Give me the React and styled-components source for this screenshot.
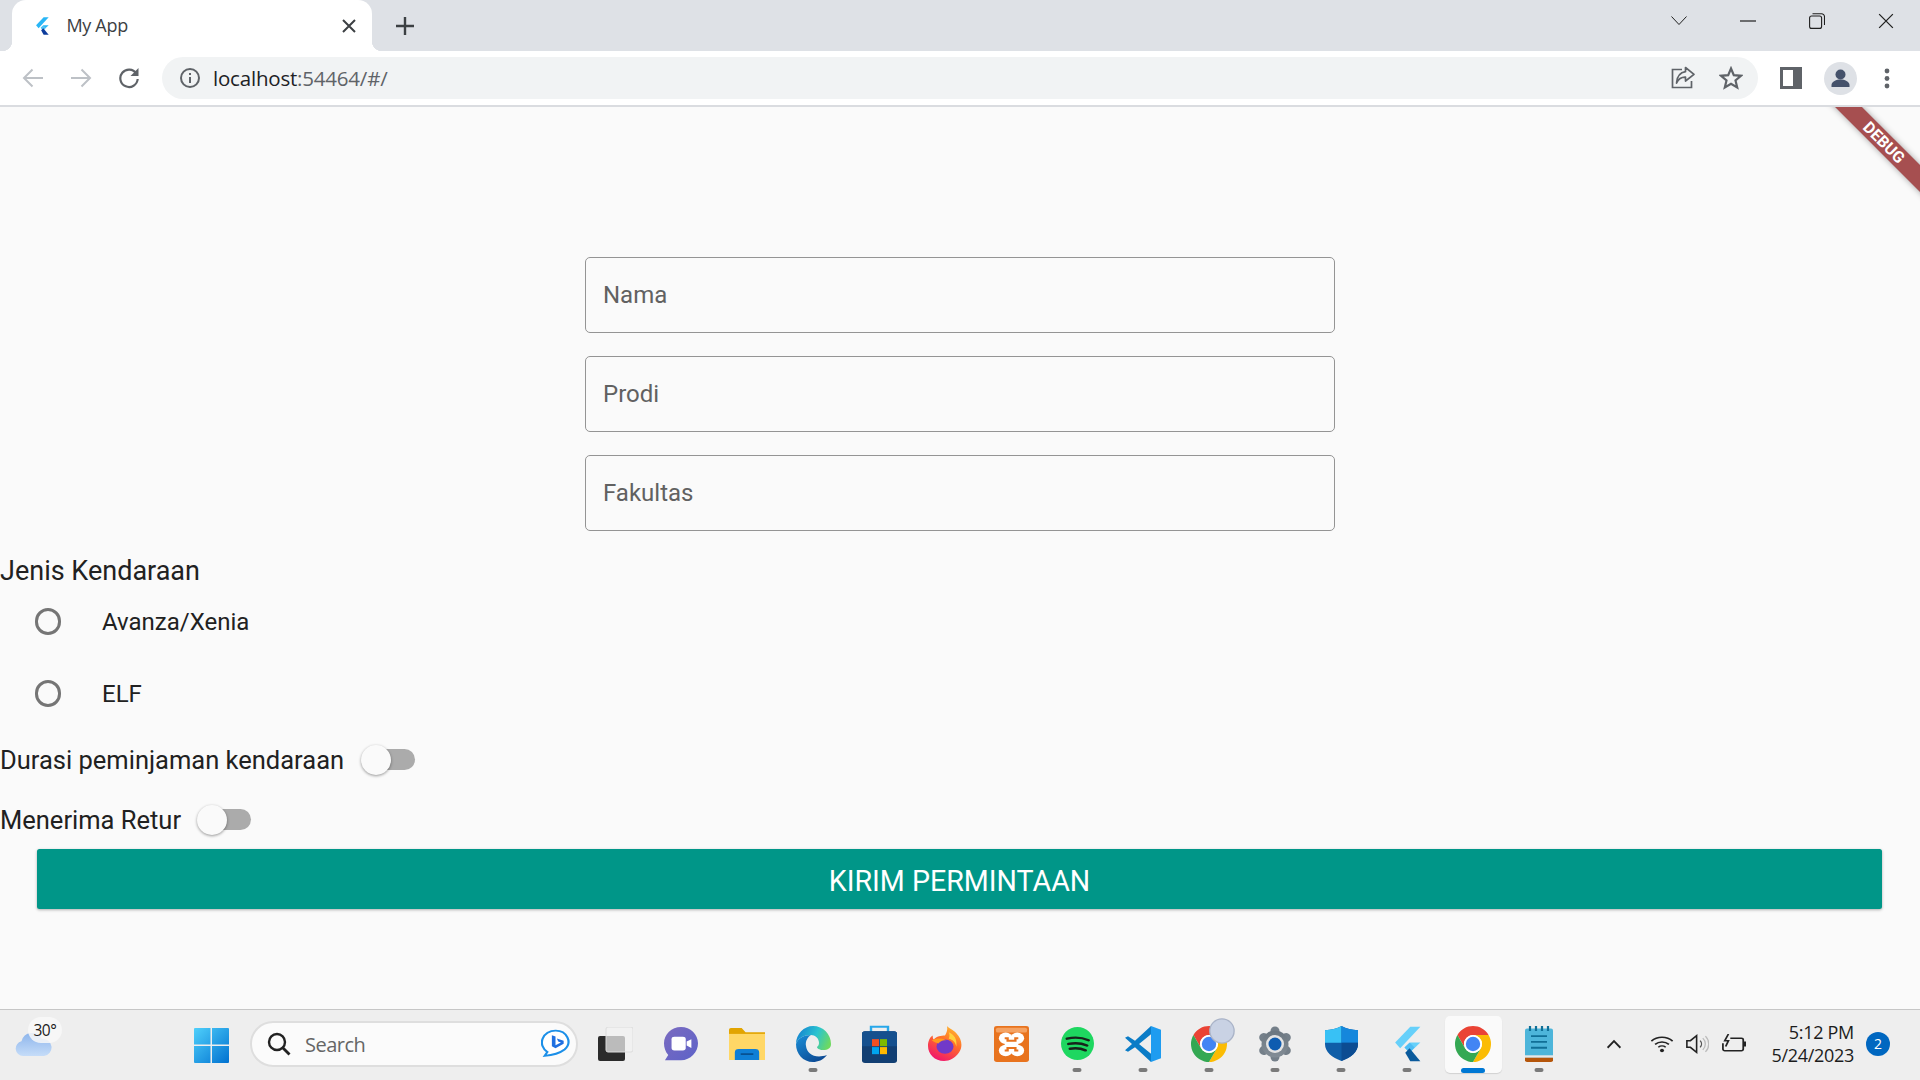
import React from 'react';
import styled, { createGlobalStyle } from 'styled-components';

const Global = createGlobalStyle`
  html, body { margin: 0; padding: 0; background: #fafafa; }
  * { box-sizing: border-box; }
`;
const UI = '"Open Sans", "Noto Sans", "Liberation Sans", sans-serif';
const APP = 'Roboto, "Liberation Sans", sans-serif';

const Page = styled.div`width:1920px;height:1080px;display:flex;flex-direction:column;overflow:hidden;font-family:${APP};`;
const TabStrip = styled.div`height:51px;background:#dee1e6;display:flex;padding-left:12px;flex:none;`;
const Tab = styled.div`
  position:relative;width:360px;height:51px;background:#fff;border-radius:14px 14px 0 0;display:flex;align-items:center;padding:0 16px 0 23px;
  &::before,&::after{content:"";position:absolute;bottom:0;width:10px;height:10px;}
  &::before{left:-10px;background:radial-gradient(circle at 0 0,transparent 10px,#fff 10.5px);}
  &::after{right:-10px;background:radial-gradient(circle at 100% 0,transparent 10px,#fff 10.5px);}
`;
const TabTitle = styled.span`margin:0 0 2px 17px;font:400 18px ${UI};color:#3c4043;letter-spacing:-.3px;`;
const TabClose = styled.span`margin-left:auto;display:flex;`;
const NewTab = styled.span`margin-left:24px;display:flex;align-items:center;`;
const WindowControls = styled.div`margin-left:auto;display:flex;height:42px;`;
const WinButton = styled.span`width:69px;display:flex;align-items:center;justify-content:center;`;
const Toolbar = styled.div`height:56px;flex:none;background:#fff;border-bottom:2px solid #dadce0;display:flex;align-items:center;padding:0 0 0 9px;`;
const NavButton = styled.span`width:48px;display:flex;justify-content:center;`;
const Omnibox = styled.div`margin-left:9px;width:1596px;height:42px;border-radius:21px;background:#f1f3f4;display:flex;align-items:center;padding:0 15px 0 16px;`;
const Url = styled.span`margin-left:11px;font:400 20.5px ${UI};color:#202124;letter-spacing:-.2px;`;
const UrlDim = styled.span`color:#5f6368;`;
const OmniActions = styled.div`margin-left:auto;display:flex;gap:24px;`;
const ToolSlot = styled.span`width:34px;display:flex;justify-content:center;margin-left:${p=>p.$ml}px;`;

const Main = styled.main`position:relative;flex:1;overflow:hidden;background:#fafafa;padding-top:150px;color:#212121;`;
const Debug = styled.div`
  position:absolute;top:26px;right:-44px;width:160px;height:19px;background:#a64f50;color:#fff;transform:rotate(45deg);
  display:flex;align-items:center;justify-content:center;font:700 16px/19px ${APP};box-shadow:0 0 6px rgba(0,0,0,.35);
`;
const Fields = styled.div`width:750px;margin:0 0 0 585px;display:flex;flex-direction:column;gap:23px;`;
const Field = styled.div`height:76px;border:1.5px solid #949494;border-radius:5px;padding:0 17px;display:flex;align-items:center;font-size:24px;color:#616161;`;
const Title = styled.div`padding-top:25px;height:54px;font-size:27px;line-height:30px;`;
const RadioList = styled.div`padding-bottom:1px;`;
const RadioRow = styled.div`height:72px;display:flex;align-items:center;padding:1px 0 0 34.5px;font-size:24px;`;
const Radio = styled.span`width:26.5px;height:26.5px;border:3px solid #757575;border-radius:50%;margin-right:41px;`;
const SwitchGroup = styled.div`height:119px;`;
const SwitchRow = styled.div`height:60px;display:flex;align-items:center;font-size:25.5px;`;
const Toggle = styled.span`position:relative;width:53.5px;height:30px;margin:0 0 1px ${p=>p.$ml}px;display:flex;align-items:center;justify-content:flex-end;`;
const Track = styled.span`width:41px;height:21px;border-radius:10.5px;background:#ababab;`;
const Thumb = styled.span`position:absolute;left:0;top:0;width:30px;height:30px;border-radius:50%;background:#fafafa;box-shadow:0 1px 3px rgba(0,0,0,.4);`;
const Submit = styled.div`
  margin:0 38px 0 37px;height:60px;padding-top:3px;background:#009688;color:#fff;border-radius:2.5px;display:flex;align-items:center;justify-content:center;
  font-size:28.6px;font-weight:400;box-shadow:0 1px 3px rgba(0,0,0,.3);
`;

const Taskbar = styled.footer`height:71px;flex:none;background:#eeeeee;border-top:1px solid #c6c6c6;display:flex;align-items:center;`;
const Weather = styled.div`position:relative;width:194px;height:70px;padding:23px 0 0 15px;`;
const Temp = styled.span`position:absolute;left:28px;top:7px;width:34px;height:26px;border-radius:13px;background:rgba(248,248,248,.85);font:400 15.5px/26px ${UI};color:#1c1c1c;text-align:center;letter-spacing:-.4px;`;
const Start = styled.span`width:35px;height:35px;margin-right:21px;display:flex;`;
const SearchBox = styled.div`width:328px;height:46px;margin:0 4px 2px 0;border-radius:23px;background:#fbfbfb;border:2px solid #dedede;display:flex;align-items:center;padding:0 6px 0 15px;`;
const SearchText = styled.span`margin-left:14px;font:400 20px ${UI};color:#666;letter-spacing:-.5px;`;
const BingWrap = styled.span`margin-left:auto;display:flex;`;
const Slot = styled.span`position:relative;width:66px;height:70px;display:flex;align-items:center;justify-content:center;padding-bottom:3px;`;
const ActiveTile = styled.span`position:absolute;left:4.5px;top:6px;width:57px;height:57px;border-radius:5px;background:#fafafa;box-shadow:0 1px 1px rgba(0,0,0,.12);`;
const IconLayer = styled.span`position:relative;display:flex;`;
const RunDot = styled.span`position:absolute;bottom:${p=>p.$active?'7px':'8px'};left:50%;transform:translateX(-50%);height:${p=>p.$active?'5px':'4.5px'};border-radius:3px;width:${p=>p.$active?'24px':'9px'};background:${p=>p.$active?'#0078d4':'#7a7a7a'};`;
const Tray = styled.span`display:flex;margin:0 0 2px ${p=>p.$ml}px;`;
const Clock = styled.div`width:100px;margin:0 0 2px 8px;text-align:right;font:400 18px/23px ${UI};color:#1c1c1c;letter-spacing:-.3px;`;
const Badge = styled.span`width:24px;height:24px;margin:0 0 2px 12px;border-radius:50%;background:#0067c0;color:#fff;font:400 14px/24px ${UI};text-align:center;`;

const Flutter = ({h=24,c1='#54c5f8',c2='#29b6f6',c3='#01579b'}) => (
  <svg width={h*0.8} height={h} viewBox="0 0 20 24"><polygon fill={c1} points="12,0 19,0 5,15 1.5,11"/><polygon fill={c1} points="12,11 19,11 11.5,18 8,14.5"/><polygon fill={c2} points="8,14.5 11.5,11 15,14.500 11.500,18"/><polygon fill={c3} points="8.500,18 11.500,15 19,24 12,24"/></svg>
);
const X = ({s=14,c='#3c4043',w=2}) => <svg width={s} height={s} viewBox="0 0 14 14"><path d="M1 1 13 13M13 1 1 13" stroke={c} strokeWidth={w} fill="none"/></svg>;
const Plus = () => <svg width="18" height="18" viewBox="0 0 18 18"><path d="M9 0v18M0 9h18" stroke="#3c4043" strokeWidth="2.4"/></svg>;
const Arrow = ({dir,c}) => <svg width="22" height="20" viewBox="0 0 22 20" style={{transform:dir==='r'?'scaleX(-1)':undefined}}><path d="M21 10H2.500M10.500 1.500 2 10l8.500 8.500" stroke={c} strokeWidth="2" fill="none"/></svg>;
const Reload = () => <svg width="22" height="22" viewBox="0 0 22 22"><path d="M18.300 6.500A8.700 8.700 0 1 0 19.700 12" stroke="#5f6368" strokeWidth="2.200" fill="none"/><path d="M20.500 1v8h-8z" fill="#5f6368"/></svg>;
const Info = () => <svg width="24" height="24" viewBox="0 0 24 24"><circle cx="12" cy="12" r="9" stroke="#5f6368" strokeWidth="2" fill="none"/><path d="M12 11v6M12 7v2" stroke="#5f6368" strokeWidth="2"/></svg>;
const Share = () => <svg width="24" height="24" viewBox="0 0 24 24"><path d="M11 3.500H1.500v18h19V15" stroke="#5f6368" strokeWidth="1.700" fill="none"/><path d="M14.500 1.500 23 8.300l-8.500 6.700v-3.800C10 11 7.500 13 5.500 17c.5-6 3.500-10.500 9-11.300z" stroke="#5f6368" strokeWidth="1.700" fill="none" strokeLinejoin="round"/></svg>;
const Star = () => <svg width="24" height="24" viewBox="0 0 24 24"><path d="M12 2.500 14.800 9.200l7.200.6-5.500 4.700 1.700 7-6.200-3.700-6.200 3.700 1.700-7L2 9.800l7.200-.6z" stroke="#5f6368" strokeWidth="2.200" fill="none"/></svg>;
const SidePanel = () => <svg width="22" height="22" viewBox="0 0 22 22"><path fillRule="evenodd" d="M0 0h22v22H0zM3 3v16h10V3z" fill="#5f6368"/></svg>;
const Profile = () => <svg width="33" height="33" viewBox="0 0 33 33"><circle cx="16.500" cy="16.500" r="16.500" fill="#dee1e6"/><circle cx="16.500" cy="12.500" r="5" fill="#45526b"/><path d="M7.500 25v-2c0-3.500 5-5.500 9-5.500s9 2 9 5.500v2z" fill="#45526b"/></svg>;
const Kebab = () => <svg width="6" height="21" viewBox="0 0 6 21"><circle cx="3" cy="3" r="2.400" fill="#5f6368"/><circle cx="3" cy="10.500" r="2.400" fill="#5f6368"/><circle cx="3" cy="18" r="2.400" fill="#5f6368"/></svg>;
const Chevron = () => <svg width="16" height="10" viewBox="0 0 16 10"><path d="M.5.5 8 8.500 15.500.5" stroke="#1f1f1f" strokeWidth="1" fill="none"/></svg>;
const Minim = () => <svg width="16" height="2" viewBox="0 0 16 2"><path d="M0 1h16" stroke="#1f1f1f" strokeWidth="1.200"/></svg>;
const Restore = () => <svg width="16" height="16" viewBox="0 0 16 16"><rect x=".6" y="3" width="12" height="12.400" rx="2" stroke="#1f1f1f" strokeWidth="1.100" fill="none"/><path d="M3.500.7H12.500a3 3 0 0 1 3 3V12" stroke="#1f1f1f" strokeWidth="1.100" fill="none"/></svg>;

const Cloud = () => <svg width="37" height="23" viewBox="0 0 37 23"><defs><linearGradient id="cl" x1="0" y1="0" x2="0" y2="1"><stop offset="0" stopColor="#8db5ec"/><stop offset="1" stopColor="#c5dcf8"/></linearGradient></defs><path d="M8 23a7.500 7.500 0 0 1-1.500-14.800A11 11 0 0 1 27 6a8.500 8.500 0 0 1 2 17z" fill="url(#cl)"/></svg>;
const WinLogo = () => <svg width="35" height="35" viewBox="0 0 35 35"><defs><linearGradient id="w" x1="0" y1="0" x2="1" y2="1"><stop offset="0" stopColor="#4fd0fb"/><stop offset="1" stopColor="#0071d0"/></linearGradient></defs><path fill="url(#w)" d="M1 0h15.500v16.500H0V1a1 1 0 0 1 1-1zM18 0h16a1 1 0 0 1 1 1v15.500H18zM0 18h16.500v17H1a1 1 0 0 1-1-1zM18 18h17v16a1 1 0 0 1-1 1H18z"/></svg>;
const Magnifier = () => <svg width="24" height="24" viewBox="0 0 24 24"><circle cx="10" cy="10" r="8" stroke="#222" strokeWidth="2.400" fill="none"/><path d="M15.500 15.500 22.500 22.500" stroke="#222" strokeWidth="2.800"/></svg>;
const Bing = () => <svg width="29" height="30" viewBox="0 0 32 38" preserveAspectRatio="none"><path d="M16 2a14 14 0 0 1 10 24c-4 3.500-10 7-22 8l3-5A15 15 0 0 1 16 2z" fill="#fff" stroke="#1b8fe8" strokeWidth="2.400"/><path d="M12 8l4 1.500v11l6-3.300-3-1.400-1.500-3.800 7.500 2.800v4l-9 5.500-4-2.300z" fill="#1f6fe0"/></svg>;
const TaskView = () => <svg width="35" height="34" viewBox="0 0 35 34"><rect x="0" y="9" width="27" height="25" rx="2" fill="#2b2b2b"/><rect x="8" y="0" width="27" height="25" rx="2" fill="#f2f2f2" fillOpacity=".72" stroke="#dcdcdc"/></svg>;
const Chat = () => <svg width="34" height="34" viewBox="0 0 36 42" preserveAspectRatio="none"><defs><linearGradient id="ch" x1="0" y1="0" x2="1" y2="1"><stop offset="0" stopColor="#7b6bc0"/><stop offset="1" stopColor="#5d62c8"/></linearGradient></defs><path d="M18 0c10 0 18 9 18 20s-8 21-18 21H1l3.500-6.500C1.500 30.500 0 25.500 0 20 0 9 8 0 18 0z" fill="url(#ch)"/><rect x="8" y="12" width="15" height="17" rx="3" fill="#fff"/><path d="M24 18l5-3v11l-5-3z" fill="#fff"/></svg>;
const Folder = () => <svg width="36" height="32" viewBox="0 0 37 38" preserveAspectRatio="none"><path d="M0 2a2 2 0 0 1 2-2h11l4 5h20v33H0z" fill="#e2a400"/><rect y="7" width="37" height="31" fill="#ffd766"/><path d="M6 38V29a4 4 0 0 1 4-4h17a4 4 0 0 1 4 4v9z" fill="#0f7fd6"/><rect x="12" y="30" width="13" height="2" fill="#084f8f"/></svg>;
const Edge = () => <svg width="36" height="36" viewBox="0 0 36 36"><defs><linearGradient id="e1" x1="0" y1=".3" x2="1" y2=".6"><stop offset="0" stopColor="#1482d0"/><stop offset=".55" stopColor="#2ac4d0"/><stop offset="1" stopColor="#6ed960"/></linearGradient><linearGradient id="e2" x1="0" y1="0" x2=".7" y2="1"><stop offset="0" stopColor="#1a8fd8"/><stop offset="1" stopColor="#0c4a94"/></linearGradient></defs><path d="M1 18C1 8 9 0 18 0 28 0 36 8 36 18c0 4-3 6-8 6-4 0-6-2-6-3 1-1 2-2 2-4 0-5-4-8-8-8C9 9 3 12 1 18z" fill="url(#e1)"/><path d="M1 18C3 12 9 9 16 9c-3 2-6 6-5 11 1 8 9 13 21 9-4 5-9 7-14 7C8 36 1 28 1 18z" fill="url(#e2)"/></svg>;
const Store = () => <svg width="35" height="38" viewBox="0 0 35 43" preserveAspectRatio="none"><path d="M9 10V2h17v8" stroke="#28a8ea" strokeWidth="2.400" fill="none"/><rect y="7" width="35" height="36" rx="3" fill="#123f73"/><path d="M0 10a3 3 0 0 1 3-3h29a3 3 0 0 1 3 3v14H0z" fill="#15508e"/><rect x="10" y="16" width="7" height="8" fill="#f25022"/><rect x="18" y="16" width="7" height="8" fill="#7fba00"/><rect x="10" y="25" width="7" height="8" fill="#00a4ef"/><rect x="18" y="25" width="7" height="8" fill="#ffb900"/></svg>;
const Firefox = () => <svg width="34" height="35" viewBox="0 0 36 44" preserveAspectRatio="none"><defs><linearGradient id="f" x1=".8" y1="0" x2=".3" y2="1"><stop offset="0" stopColor="#ffbd2e"/><stop offset=".45" stopColor="#ff6b2b"/><stop offset="1" stopColor="#f0146e"/></linearGradient></defs><path d="M20 0c2 3 6 4 10 9 6 7 7 17 3 24-4 7-10 11-16 11C7 44 0 35 0 25c0-6 2-11 5-13 0 2 0 3 1 5 3-4 8-5 12-5 2-4 3-8 2-12z" fill="url(#f)"/><circle cx="18" cy="26" r="9" fill="#7139c9"/><path d="M4 18c4-3 12-3 15 0-5 0-6 2-8 4-3-1-5-2-7-4z" fill="#ff9a1f"/><path d="M22 8c6 3 9 9 8 18-1-6-4-9-8-10 1-3 1-5 0-8z" fill="#ffd23e"/></svg>;
const Xampp = () => <svg width="35" height="36" viewBox="0 0 36 44" preserveAspectRatio="none"><rect width="36" height="44" rx="3" fill="#e8731e"/><rect x="2" y="2" width="32" height="6" rx="2" fill="#f5a262"/><g fill="#fff"><circle cx="12" cy="15" r="7"/><circle cx="24" cy="15" r="7"/><circle cx="12" cy="30" r="7"/><circle cx="24" cy="30" r="7"/><rect x="11" y="15" width="14" height="15"/></g><path d="M11 15h3v3h8v-3h3M11 30h3v-3h8v3h3" stroke="#e8731e" strokeWidth="2.400" fill="none"/></svg>;
const Spotify = () => <svg width="33" height="33" viewBox="0 0 33 41" preserveAspectRatio="none"><ellipse cx="16.500" cy="20.500" rx="16.500" ry="20.500" fill="#1ed760"/><path d="M6 14.500c7-2 15-1.500 21.500 2M7.500 21c6-1.500 13-1 18.500 2M9 27c5-1 11-.500 15.500 2" stroke="#17231b" strokeWidth="3" fill="none" strokeLinecap="round"/></svg>;
const VSCode = () => <svg width="36" height="36" viewBox="0 0 36 44" preserveAspectRatio="none"><path d="M26 0l10 4.500v35L26 44z" fill="#1f9cf0"/><path d="M26 0 10 18 3 12.500 0 14.500 7 22l-7 7.500 3 2 7-5.500 16 18v-10L14 22 26 10z" fill="#0a7cc7"/></svg>;
const ChromeParts = () => <><path fill="#ea4335" d="M6.680 14A20 20 0 0 1 41.320 14H24A10 10 0 0 0 15.340 29z"/><path fill="#fbbc04" d="M41.320 14A20 20 0 0 1 24 44L32.660 29A10 10 0 0 0 24 14z"/><path fill="#34a853" d="M24 44A20 20 0 0 1 6.680 14L15.340 29A10 10 0 0 0 32.660 29z"/><circle cx="24" cy="24" r="10" fill="#fff"/><circle cx="24" cy="24" r="8" fill="#4285f4"/></>;
const ChromeMark = () => <svg width="36" height="36" viewBox="4 4 40 40"><ChromeParts /></svg>;
const ChromeBadged = () => <svg width="36" height="36" viewBox="4 4 40 40" overflow="visible"><ChromeParts /><circle cx="38.400" cy="9.500" r="13.500" fill="#c9d2e4" stroke="#aab4c8" strokeWidth="1.500"/></svg>;
const Gear = () => <svg width="36" height="36" viewBox="0 0 36 36"><defs><linearGradient id="g" x1="0" y1="0" x2="0" y2="1"><stop offset="0" stopColor="#6b7680"/><stop offset="1" stopColor="#838d96"/></linearGradient></defs><g stroke="#747f89" strokeWidth="9" strokeLinecap="round"><path d="M18 5v26"/><path d="M18 5v26" transform="rotate(60 18 18)"/><path d="M18 5v26" transform="rotate(120 18 18)"/></g><circle cx="18" cy="18" r="13.500" fill="url(#g)"/><circle cx="18" cy="18" r="9" fill="#e4e4e4"/><circle cx="18" cy="18" r="6.500" fill="#0f5cb0"/></svg>;
const Shield = () => <svg width="33" height="35" viewBox="0 0 33 42" preserveAspectRatio="none"><path d="M16.500 0C21 3 27 5 33 5v17c0 9-7 16-16.500 20C7 38 0 31 0 22V5c6 0 12-2 16.500-5z" fill="#0f5ea8"/><path d="M16.500 0C12 3 6 5 0 5v15h16.500z" fill="#38c1f5"/><path d="M16.500 0v20H33V5c-6 0-12-2-16.500-5z" fill="#1587dc"/><path d="M16.500 20H33v2c0 9-7 16-16.500 20z" fill="#0c4c92"/></svg>;
const Notepad = () => <svg width="28" height="36" viewBox="0 0 28 43" preserveAspectRatio="none"><rect y="3" width="28" height="36" rx="2" fill="#4db5da"/><rect y="35" width="28" height="3" fill="#e8e8e8"/><path d="M0 38h28v3a2 2 0 0 1-2 2H2a2 2 0 0 1-2-2z" fill="#b5560b"/><path d="M5 0v6M11 0v6M17 0v6M23 0v6" stroke="#106f97" strokeWidth="2.200"/><path d="M6 12h16M6 19h16M6 26h16" stroke="#106f97" strokeWidth="2.200"/></svg>;
const Caret = () => <svg width="16" height="10" viewBox="0 0 20 12" preserveAspectRatio="none"><path d="M2 10.500 10 2.500l8 8" stroke="#222" strokeWidth="2.200" fill="none"/></svg>;
const Wifi = () => <svg width="24" height="18" viewBox="0 0 26 22" preserveAspectRatio="none"><path d="M1.500 7.500a16 16 0 0 1 23 0M5.500 11.500a11 11 0 0 1 15 0M9 15a6 6 0 0 1 8 0" stroke="#222" strokeWidth="1.800" fill="none"/><circle cx="13" cy="19" r="2.200" fill="#222"/></svg>;
const Volume = () => <svg width="23" height="20" viewBox="0 0 26 24" preserveAspectRatio="none"><path d="M1 8h4l7-6v20l-7-6H1z" stroke="#222" strokeWidth="1.800" fill="none"/><path d="M16 8a6 6 0 0 1 0 8" stroke="#555" strokeWidth="1.500" fill="none"/><path d="M19 5a10 10 0 0 1 0 14M22 2.500a14 14 0 0 1 0 19" stroke="#bbb" strokeWidth="1.500" fill="none"/></svg>;
const Battery = () => <svg width="24" height="20" viewBox="0 0 26 24" preserveAspectRatio="none"><path d="M9 5h12a2 2 0 0 1 2 2v11a2 2 0 0 1-2 2H3a2 2 0 0 1-2-2v-7" stroke="#222" strokeWidth="1.900" fill="none"/><rect x="23" y="9" width="3" height="6" fill="#222"/><path d="M7 0 3 8h4l-3 7" stroke="#222" strokeWidth="1.900" fill="none"/></svg>;

const SwitchLine = ({ label, ml }) => (
  <SwitchRow>{label}<Toggle $ml={ml}><Track /><Thumb /></Toggle></SwitchRow>
);

const apps = [
  [<TaskView key="a" />, false], [<Chat key="b" />, false], [<Folder key="c" />, false], [<Edge key="d" />, true],
  [<Store key="e" />, false], [<Firefox key="f" />, false], [<Xampp key="g" />, false], [<Spotify key="h" />, true],
  [<VSCode key="i" />, true], [<ChromeBadged key="j" />, true], [<Gear key="k" />, true], [<Shield key="l" />, true],
  [<Flutter key="m" h={36} c1="#66d0fa" c2="#4dbdf5" c3="#0a5a9c" />, true],
];

export default function App() {
  return (
    <Page>
      <Global />
      <TabStrip>
        <Tab>
          <Flutter h={18} c1="#29b6f6" c2="#4fc3f7" c3="#0d3c9c" />
          <TabTitle>My App</TabTitle>
          <TabClose><X /></TabClose>
        </Tab>
        <NewTab><Plus /></NewTab>
        <WindowControls>
          <WinButton><Chevron /></WinButton>
          <WinButton><Minim /></WinButton>
          <WinButton><Restore /></WinButton>
          <WinButton><X s={16} c="#1f1f1f" w={1.1} /></WinButton>
        </WindowControls>
      </TabStrip>
      <Toolbar>
        <NavButton><Arrow c="#bdc1c6" /></NavButton>
        <NavButton><Arrow dir="r" c="#bdc1c6" /></NavButton>
        <NavButton><Reload /></NavButton>
        <Omnibox>
          <Info />
          <Url>localhost<UrlDim>:54464/#/</UrlDim></Url>
          <OmniActions><Share /><Star /></OmniActions>
        </Omnibox>
        <ToolSlot $ml={16}><SidePanel /></ToolSlot>
        <ToolSlot $ml={15}><Profile /></ToolSlot>
        <ToolSlot $ml={13}><Kebab /></ToolSlot>
      </Toolbar>
      <Main>
        <Debug>DEBUG</Debug>
        <Fields>
          <Field>Nama</Field>
          <Field>Prodi</Field>
          <Field>Fakultas</Field>
        </Fields>
        <Title>Jenis Kendaraan</Title>
        <RadioList>
          <RadioRow><Radio />Avanza/Xenia</RadioRow>
          <RadioRow><Radio />ELF</RadioRow>
        </RadioList>
        <SwitchGroup>
          <SwitchLine label="Durasi peminjaman kendaraan" ml={17} />
          <SwitchLine label="Menerima Retur" ml={16} />
        </SwitchGroup>
        <Submit>KIRIM PERMINTAAN</Submit>
      </Main>
      <Taskbar>
        <Weather><Cloud /><Temp>30°</Temp></Weather>
        <Start><WinLogo /></Start>
        <SearchBox>
          <Magnifier />
          <SearchText>Search</SearchText>
          <BingWrap><Bing /></BingWrap>
        </SearchBox>
        {apps.map(([icon, on], i) => (
          <Slot key={i}>{icon}{on && <RunDot />}</Slot>
        ))}
        <Slot>
          <ActiveTile />
          <IconLayer><ChromeMark /></IconLayer>
          <RunDot $active />
        </Slot>
        <Slot><Notepad /><RunDot /></Slot>
        <Tray $ml={34}><Caret /></Tray>
        <Tray $ml={28}><Wifi /></Tray>
        <Tray $ml={12}><Volume /></Tray>
        <Tray $ml={13}><Battery /></Tray>
        <Clock>5:12 PM<br />5/24/2023</Clock>
        <Badge>2</Badge>
      </Taskbar>
    </Page>
  );
}
